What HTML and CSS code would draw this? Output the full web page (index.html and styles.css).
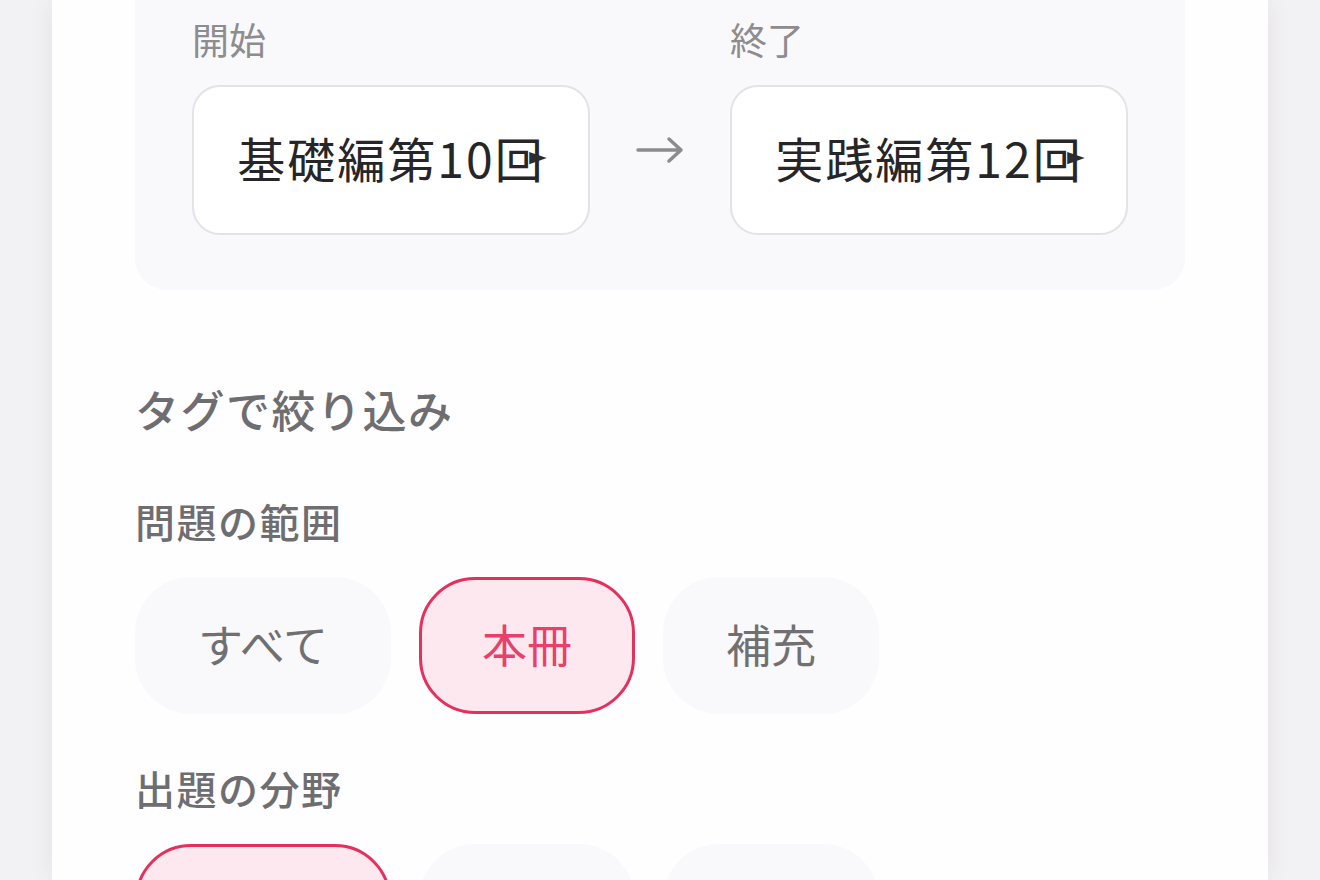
FILE: index.html
```html
<!DOCTYPE html>
<html lang="ja">
<head>
<meta charset="utf-8">
<title>絞り込み</title>
<link rel="stylesheet" href="styles.css">
</head>
<body>
<div class="screen">
  <main class="card">
    <section class="range">
      <div class="range-row">
        <div class="field">
          <div class="field-label">開始</div>
          <div class="select">
            <span class="value">基礎編第10回<svg class="caret" viewBox="0 0 20 16"><polygon points="0,1 20,8 0,15"/></svg></span>
          </div>
        </div>
        <div class="arrow">
          <svg viewBox="0 0 48 28"><path d="M2 14H45M33 3L45 14L33 25"/></svg>
        </div>
        <div class="field">
          <div class="field-label">終了</div>
          <div class="select">
            <span class="value">実践編第12回<svg class="caret" viewBox="0 0 20 16"><polygon points="0,1 20,8 0,15"/></svg></span>
          </div>
        </div>
      </div>
    </section>

    <h2 class="filter-title">タグで絞り込み</h2>

    <div class="group">
      <h3 class="group-title">問題の範囲</h3>
      <div class="chips">
        <button class="chip">すべて</button>
        <button class="chip is-selected">本冊</button>
        <button class="chip">補充</button>
      </div>
    </div>

    <div class="group">
      <h3 class="group-title">出題の分野</h3>
      <div class="chips">
        <button class="chip is-selected">すべて</button>
        <button class="chip">文法</button>
        <button class="chip">語彙</button>
      </div>
    </div>
  </main>
</div>
</body>
</html>
```

FILE: styles.css
```css
* {
  box-sizing: border-box;
}

html, body {
  margin: 0;
  padding: 0;
  background: #f2f1f3;
}

body {
  font-family: "Noto Sans CJK JP", "Noto Sans", sans-serif;
  color: #222;
}

.screen {
  display: flex;
  height: 880px;
  padding: 0 52px;
  overflow: hidden;
  background: #f2f1f3;
}

.card {
  flex: 1;
  background: #fefdff;
  padding: 0 83px;
  box-shadow: 0 0 26px rgba(40, 30, 50, 0.07);
}

/* range panel */
.range {
  background: #f9f8fb;
  border-radius: 0 0 32px 32px;
  padding: 21px 57px 55px;
}

.range-row {
  display: grid;
  grid-template-columns: 1fr 140px 1fr;
  align-items: end;
}

.field-label {
  font-size: 37px;
  line-height: 37px;
  color: #8d8c8f;
  margin-bottom: 27px;
}

.select {
  height: 150px;
  background: #fff;
  border: 2px solid #e4e2e6;
  border-radius: 28px;
  display: flex;
  align-items: center;
  justify-content: center;
}

.value {
  position: relative;
  top: -3px;
  font-size: 48px;
  line-height: 48px;
  letter-spacing: 2px;
  color: #262527;
  white-space: nowrap;
}

.caret {
  position: absolute;
  right: -2px;
  top: calc(50% - 6px);
  width: 18px;
  height: 14px;
  fill: #2c2b2e;
}

.arrow {
  height: 130px;
  margin-bottom: 20px;
  display: flex;
  align-items: center;
  justify-content: center;
}

.arrow svg {
  width: 48px;
  height: 28px;
  fill: none;
  stroke: #8c8b8e;
  stroke-width: 3.5;
  stroke-linecap: round;
  stroke-linejoin: round;
}

/* tag filter */
.filter-title {
  margin: 97px 0 0;
  font-size: 44px;
  line-height: 44px;
  letter-spacing: 1.5px;
  font-weight: 500;
  color: #6e6d70;
}

.group-title {
  margin: 0 0 36px;
  font-size: 40px;
  line-height: 40px;
  letter-spacing: 1.5px;
  font-weight: 500;
  color: #6e6d70;
}

.filter-title + .group {
  margin-top: 70px;
}

.group + .group {
  margin-top: 54px;
}

.chips {
  display: flex;
  gap: 28px;
}

.chip {
  height: 137px;
  padding: 0 60px 4px;
  border: 3px solid transparent;
  border-radius: 56px;
  background: #f9f8fb;
  font-family: inherit;
  font-size: 45px;
  line-height: 45px;
  color: #707072;
}

.chip.is-selected {
  background: #fde8ef;
  border-color: #e5305c;
  color: #e8406a;
}
```
